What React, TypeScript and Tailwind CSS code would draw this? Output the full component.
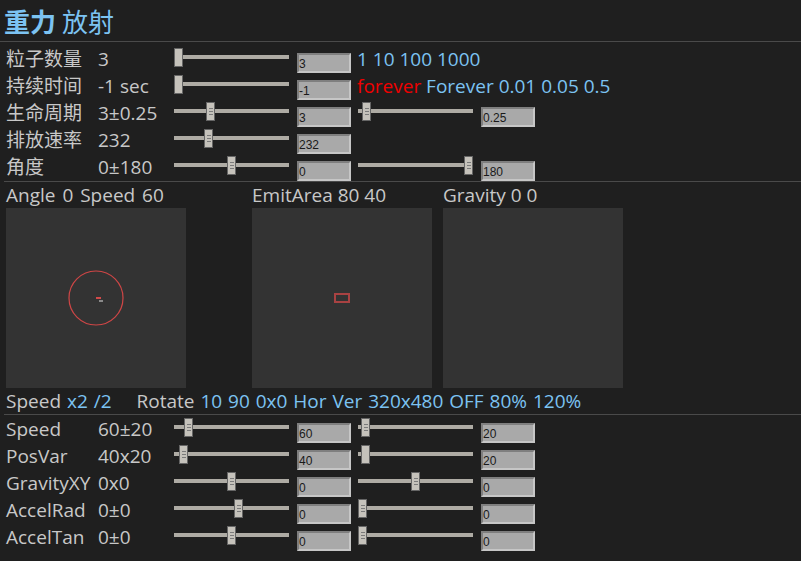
import React from "react";

const FONT = "font-['Open_Sans','Noto_Sans_CJK_SC',sans-serif]";

function Slider({ pos, grip = true }: { pos: number; grip?: boolean }) {
  return (
    <div className="relative w-[115px] h-[19px] mt-[3px] shrink-0">
      <div className="absolute left-0 right-0 top-[7px] h-[4px] bg-[#aeaba4]" />
      <div
        className="absolute top-0 w-[9px] h-[19px] bg-[#c5c2bb] border border-[#656565] flex flex-col items-center justify-center gap-[2px]"
        style={{ left: pos }}
      >
        {grip && (
          <>
            <div className="w-[4px] h-[1px] bg-[#7a7a7a]" />
            <div className="w-[4px] h-[1px] bg-[#7a7a7a]" />
            <div className="w-[4px] h-[1px] bg-[#7a7a7a]" />
          </>
        )}
      </div>
    </div>
  );
}

function Box({ v }: { v: string }) {
  return (
    <div className="w-[54px] h-[20px] mt-[8px] shrink-0 bg-[#a9a9a9] border-2 border-t-[#7f7f7f] border-l-[#7f7f7f] border-b-[#c6c6c6] border-r-[#c6c6c6] text-[12px] leading-[14px] pt-[2px] text-[#1a1a1a] font-['Liberation_Sans',sans-serif]">
      {v}
    </div>
  );
}

type Row = {
  label: string;
  value: string;
  p1: number;
  g1?: boolean;
  v1: string;
  p2?: number;
  g2?: boolean;
  v2?: string;
  extra?: React.ReactNode;
};

function ParamRow({ r }: { r: Row }) {
  return (
    <div className="flex h-[27px] pl-[6px]">
      <div className="w-[92px] shrink-0 text-[19px] leading-[27px] pt-[1px] text-[#c8c8c8] whitespace-nowrap">
        {r.label}
      </div>
      <div className="w-[76px] shrink-0 text-[19px] leading-[27px] pt-[1px] text-[#c8c8c8] whitespace-nowrap">
        {r.value}
      </div>
      <Slider pos={r.p1} grip={r.g1 !== false} />
      <div className="ml-[8px]">
        <Box v={r.v1} />
      </div>
      {r.p2 !== undefined && (
        <>
          <div className="ml-[7px]">
            <Slider pos={r.p2} grip={r.g2 !== false} />
          </div>
          <div className="ml-[8px]">
            <Box v={r.v2 || ""} />
          </div>
        </>
      )}
      {r.extra && (
        <div className="ml-[6px] text-[19px] leading-[27px] pt-[1px] whitespace-nowrap">
          {r.extra}
        </div>
      )}
    </div>
  );
}

const topRows: Row[] = [
  {
    label: "粒子数量",
    value: "3",
    p1: 0,
    g1: false,
    v1: "3",
    extra: <span className="text-[#7cc3f2]">1 10 100 1000</span>,
  },
  {
    label: "持续时间",
    value: "-1 sec",
    p1: 0,
    g1: false,
    v1: "-1",
    extra: (
      <>
        <span className="text-[#f00000]">forever</span>
        <span className="text-[#7cc3f2]"> Forever 0.01 0.05 0.5</span>
      </>
    ),
  },
  { label: "生命周期", value: "3±0.25", p1: 32, v1: "3", p2: 4, v2: "0.25" },
  { label: "排放速率", value: "232", p1: 30, v1: "232" },
  { label: "角度", value: "0±180", p1: 53, v1: "0", p2: 106, v2: "180" },
];

const bottomRows: Row[] = [
  { label: "Speed", value: "60±20", p1: 10, v1: "60", p2: 3, v2: "20" },
  { label: "PosVar", value: "40x20", p1: 5, v1: "40", p2: 3, g2: false, v2: "20" },
  { label: "GravityXY", value: "0x0", p1: 53, v1: "0", p2: 53, v2: "0" },
  { label: "AccelRad", value: "0±0", p1: 60, v1: "0", p2: 0, v2: "0" },
  { label: "AccelTan", value: "0±0", p1: 53, v1: "0", p2: 0, v2: "0" },
];

export default function App() {
  return (
    <div className={`w-[801px] h-[561px] bg-[#1f1f1f] overflow-hidden ${FONT}`}>
      <div className="h-[42px] pl-[4px] flex items-center border-b border-[#4a4a4a] text-[26px] leading-[30px] text-[#7cc3f2] pt-[2px]">
        <span className="font-bold">重力</span>
        <span className="ml-[6px]">放射</span>
      </div>
      <div className="mt-[3px]">
        {topRows.map((r, i) => (
          <ParamRow key={i} r={r} />
        ))}
      </div>
      <div className="mt-[1px] ml-[4px] h-[1px] bg-[#4a4a4a]" />
      <div className="flex pl-[6px]">
        <div className="w-[180px]">
          <div className="h-[26px] text-[19px] leading-[26px] text-[#c8c8c8] whitespace-nowrap [word-spacing:2px]">Angle 0 Speed 60</div>
          <div className="w-[180px] h-[180px] bg-[#333333]">
            <svg width="180" height="180" viewBox="0 0 180 180">
              <circle cx="90" cy="90" r="27" fill="none" stroke="#cf4646" strokeWidth="1.2" />
              <rect x="90" y="89" width="5" height="2" fill="#d24a4a" />
              <rect x="93" y="92" width="4" height="2" fill="#8a8a8a" />
            </svg>
          </div>
        </div>
        <div className="w-[180px] ml-[66px]">
          <div className="h-[26px] text-[19px] leading-[26px] text-[#c8c8c8] whitespace-nowrap">EmitArea 80 40</div>
          <div className="w-[180px] h-[180px] bg-[#333333]">
            <svg width="180" height="180" viewBox="0 0 180 180">
              <rect x="83" y="86" width="14" height="8" fill="none" stroke="#a84242" strokeWidth="2" />
            </svg>
          </div>
        </div>
        <div className="w-[180px] ml-[11px]">
          <div className="h-[26px] text-[19px] leading-[26px] text-[#c8c8c8] whitespace-nowrap">Gravity 0 0</div>
          <div className="w-[180px] h-[180px] bg-[#333333]" />
        </div>
      </div>
      <div className="h-[26px] pl-[6px] text-[19px] leading-[26px] whitespace-nowrap [word-spacing:1px]">
        <span className="text-[#c8c8c8]">Speed </span>
        <span className="text-[#7cc3f2]">x2 /2</span>
        <span className="text-[#c8c8c8] ml-[25px]">Rotate </span>
        <span className="text-[#7cc3f2]">10 90 0x0 Hor Ver 320x480 OFF 80% 120%</span>
      </div>
      <div className="ml-[4px] h-[1px] bg-[#4a4a4a]" />
      <div>
        {bottomRows.map((r, i) => (
          <ParamRow key={i} r={r} />
        ))}
      </div>
    </div>
  );
}
